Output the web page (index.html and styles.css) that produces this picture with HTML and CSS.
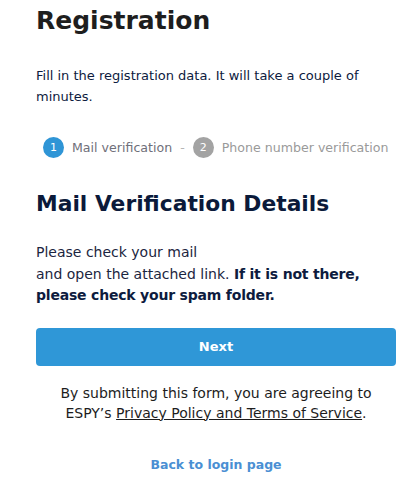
FILE: index.html
```html
<!DOCTYPE html>
<html>
<head>
<meta charset="utf-8">
<link rel="stylesheet" href="styles.css">
</head>
<body>
<main class="page">
  <h1 class="title">Registration</h1>
  <p class="intro">Fill in the registration data. It will take a couple of minutes.</p>
  <div class="steps">
    <span class="step-num active">1</span>
    <span class="step-label">Mail verification</span>
    <span class="step-sep">-</span>
    <span class="step-num">2</span>
    <span class="step-label muted">Phone number verification</span>
  </div>
  <h2 class="subtitle">Mail Verification Details</h2>
  <p class="info">Please check your mail<br>and open the attached link. <strong>If it is not there,</strong> <strong>please check your spam folder.</strong></p>
  <button class="btn">Next</button>
  <p class="terms"><span>By submitting this form, you are agreeing to</span> <span>ESPY’s</span> <a href="#" class="terms-link">Privacy Policy and Terms of Service</a>.</p>
  <a href="#" class="back">Back to login page</a>
</main>
</body>
</html>
```
FILE: styles.css
```css
* { box-sizing: border-box; }
html, body { margin: 0; padding: 0; background: #fff; }
body { font-family: "DejaVu Sans", "Open Sans", sans-serif; }
.page {
  width: 360px;
  margin-left: 36px;
  display: flex;
  flex-direction: column;
}
.title {
  margin: 0;
  padding-top: 3px;
  font-size: 25px;
  font-weight: 700;
  color: #1e1e1e;
  line-height: 36px;
}
.intro {
  margin: 26px 0 0;
  font-size: 13px;
  line-height: 21px;
  color: #0d1b3e;
}
.steps {
  margin-top: 28px;
  display: flex;
  align-items: center;
  height: 24px;
  padding-left: 7px;
  font-size: 12.6px;
}
.step-num {
  width: 21px;
  height: 21px;
  border-radius: 50%;
  background: #a3a3a3;
  color: #fff;
  font-size: 11px;
  display: flex;
  align-items: center;
  justify-content: center;
  flex-shrink: 0;
}
.step-num.active { background: #2f95d6; }
.step-label { margin-left: 8px; color: #6f6f7a; white-space: nowrap; }
.step-label.muted { color: #9a9a9a; }
.step-sep { margin: 0 8px; color: #b5b5b5; }
.subtitle {
  margin: 30px 0 0;
  font-size: 21.8px;
  font-weight: 700;
  color: #0b1a3a;
  line-height: 30px;
}
.info {
  margin: 23px 0 0;
  font-size: 14px;
  line-height: 21.5px;
  color: #1b2540;
}
.info strong { color: #0d1b3e; letter-spacing: -0.2px; }
.btn {
  margin-top: 21px;
  height: 38px;
  width: 100%;
  border: none;
  border-radius: 4px;
  background: #2f97d7;
  color: #fff;
  font-family: inherit;
  font-size: 13px;
  font-weight: 700;
}
.terms {
  margin: 17px 0 0;
  padding: 0 12px;
  text-align: center;
  font-size: 14px;
  line-height: 20px;
  color: #1d1d1d;
}
.terms-link { color: #1d1d1d; text-decoration: underline; }
.back {
  margin-top: 34px;
  align-self: center;
  font-size: 12.5px;
  font-weight: 600;
  color: #4a8fd3;
  text-decoration: none;
}
```
